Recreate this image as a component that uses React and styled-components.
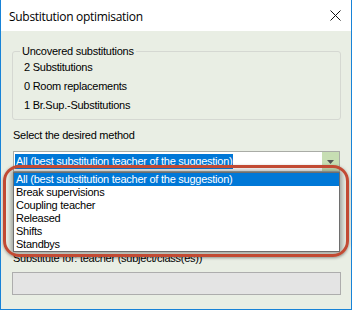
import React from "react";
import styled, { createGlobalStyle } from "styled-components";

const Global = createGlobalStyle`
  html, body { margin: 0; padding: 0; background: #ffffff; }
  * { box-sizing: border-box; }
`;

const Window = styled.div`
  width: 352px;
  height: 310px;
  border: 1px solid #1883d7;
  border-top: none;
  display: flex;
  flex-direction: column;
  font-family: "Liberation Sans", Arial, sans-serif;
  font-size: 11px;
  letter-spacing: -0.25px;
  color: #000;
`;

const TitleBar = styled.div`
  height: 31px;
  background: #ffffff;
  display: flex;
  align-items: center;
  justify-content: space-between;
  padding: 0 10px 0 8px;
  flex-shrink: 0;
`;

const Title = styled.span`
  font-family: "Segoe UI", "Open Sans", "Noto Sans", sans-serif;
  font-size: 12px;
  letter-spacing: -0.3px;
  color: #000;
  padding-top: 1px;
`;

const Body = styled.div`
  flex: 1;
  background: #e9eee4;
  padding: 14px 10px 0 11px;
  position: relative;
  display: flex;
  flex-direction: column;
`;

const Group = styled.fieldset`
  margin: 0;
  border: 1px solid #d5d8d2;
  border-radius: 3px;
  padding: 0 0 4px 11px;
`;

const Legend = styled.legend`
  padding: 0 2px;
  margin-left: -4px;
  line-height: 13px;
  font-size: 11px;
`;

const CountLine = styled.div`
  line-height: 19px;
  height: 19px;
`;

const Label = styled.div`
  line-height: 13px;
  height: 13px;
  margin-top: ${(p) => p.$mt}px;
  padding-left: 1px;
`;

const ComboWrap = styled.div`
  position: relative;
  margin-top: 9px;
  margin-left: 1px;
  margin-right: 1px;
`;

const Combo = styled.div`
  height: 21px;
  background: #fff;
  border: 1px solid #a9aca6;
  display: flex;
  align-items: center;
  padding: 0 1px;
`;

const Selected = styled.span`
  background: #0078d7;
  color: #fff;
  line-height: 15px;
  height: 15px;
  padding: 0 1px;
  flex: none;
`;

const ComboButton = styled.div`
  margin-left: auto;
  width: 17px;
  height: 19px;
  background: #c7deb3;
  display: flex;
  align-items: center;
  justify-content: center;
  margin-right: -1px;
`;

const List = styled.div`
  position: absolute;
  top: 21px;
  left: 0;
  right: 0;
  background: #fff;
  border: 1px solid #6e6e6e;
  box-shadow: 0 0 5px 2px rgba(60, 60, 60, 0.45);
  z-index: 2;
`;

const Item = styled.div`
  height: 13px;
  line-height: 13px;
  padding-left: 2px;
  background: ${(p) => (p.$active ? "#0078d7" : "transparent")};
  color: ${(p) => (p.$active ? "#fff" : "#000")};
`;

const Disabled = styled.div`
  margin-top: 7px;
  height: 23px;
  background: #e4e4e4;
  border: 1px solid #adadad;
`;

const Annotation = styled.div`
  position: absolute;
  left: 2px;
  right: 2px;
  top: 134px;
  height: 92px;
  border: 3.5px solid #c24a33;
  border-radius: 16px;
  box-shadow: 0 1px 3px rgba(0, 0, 0, 0.35);
  z-index: 3;
  pointer-events: none;
`;

const items = [
  "All (best substitution teacher of the suggestion)",
  "Break supervisions",
  "Coupling teacher",
  "Released",
  "Shifts",
  "Standbys",
];

export default function App() {
  return (
    <>
      <Global />
      <Window>
        <TitleBar>
          <Title>Substitution optimisation</Title>
          <svg width="11" height="11" viewBox="0 0 11 11">
            <path d="M0.5 0.5 L10.5 10.5 M10.5 0.5 L0.5 10.5" stroke="#111" strokeWidth="1" fill="none" />
          </svg>
        </TitleBar>
        <Body>
          <Group>
            <Legend>Uncovered substitutions</Legend>
            <CountLine>2 Substitutions</CountLine>
            <CountLine>0 Room replacements</CountLine>
            <CountLine>1 Br.Sup.-Substitutions</CountLine>
          </Group>
          <Label $mt={9}>Select the desired method</Label>
          <ComboWrap>
            <Combo>
              <Selected>{items[0]}</Selected>
              <ComboButton>
                <svg width="7" height="4" viewBox="0 0 7 4">
                  <path d="M0 0 H7 L3.5 4 Z" fill="#555" />
                </svg>
              </ComboButton>
            </Combo>
            <List>
              {items.map((t, i) => (
                <Item key={t} $active={i === 0}>{t}</Item>
              ))}
            </List>
          </ComboWrap>
          <Label $mt={80}>Substitute for: teacher (subject/class(es))</Label>
          <Disabled />
          <Annotation />
        </Body>
      </Window>
    </>
  );
}
